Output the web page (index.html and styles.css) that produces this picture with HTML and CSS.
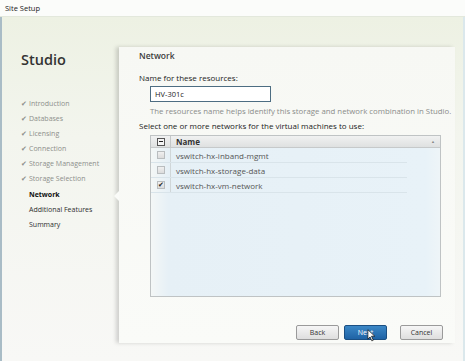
FILE: index.html
```html
<!DOCTYPE html>
<html lang="en">
<head>
  <meta charset="UTF-8" />
  <title>Site Setup</title>
  <link rel="stylesheet" href="styles.css">
</head>
<body>
  <div class="titlebar">Site Setup</div>
  <div class="window">
    <div class="sidebar">
      <h1>Studio</h1>
      <ul class="steps">
        <li class="done"><span class="tick">&#10004;</span>Introduction</li>
        <li class="done"><span class="tick">&#10004;</span>Databases</li>
        <li class="done"><span class="tick">&#10004;</span>Licensing</li>
        <li class="done"><span class="tick">&#10004;</span>Connection</li>
        <li class="done"><span class="tick">&#10004;</span>Storage Management</li>
        <li class="done"><span class="tick">&#10004;</span>Storage Selection</li>
        <li class="current">Network</li>
        <li>Additional Features</li>
        <li>Summary</li>
      </ul>
    </div>

    <div class="panel">
      <h2>Network</h2>
      <label class="field-label" for="resName">Name for these resources:</label>
      <input id="resName" class="name-input" type="text" value="HV-301c" />
      <p class="hint">The resources name helps identify this storage and network combination in Studio.</p>
      <p class="field-label">Select one or more networks for the virtual machines to use:</p>

      <div class="grid">
        <div class="grid-head">
          <span class="cell-check"><span class="box mixed"></span></span>
          <span class="cell-name">Name</span>
          <span class="sort">&#9650;</span>
        </div>
        <div class="grid-row">
          <span class="cell-check"><span class="box"></span></span>
          <span class="cell-name">vswitch-hx-inband-mgmt</span>
        </div>
        <div class="grid-row">
          <span class="cell-check"><span class="box"></span></span>
          <span class="cell-name">vswitch-hx-storage-data</span>
        </div>
        <div class="grid-row">
          <span class="cell-check"><span class="box checked">&#10004;</span></span>
          <span class="cell-name">vswitch-hx-vm-network</span>
        </div>
      </div>

      <div class="actions">
        <button class="btn">Back</button>
        <button class="btn primary">Next
          <svg class="cursor" viewBox="0 0 12 18" aria-hidden="true">
            <path d="M1 1 L1 14 L4 11 L6.5 16.5 L8.5 15.5 L6 10 L10.5 10 Z" fill="#fff" stroke="#111" stroke-width="1"/>
          </svg>
        </button>
        <button class="btn cancel">Cancel</button>
      </div>
    </div>
  </div>
</body>
</html>
```

FILE: styles.css
```css
*, *::before, *::after {
  box-sizing: border-box;
}
body {
  margin: 0;
  width: 465px;
  height: 361px;
  overflow: hidden;
  font-family: "Open Sans", "Noto Sans", sans-serif;
  font-size: 8px;
  color: #2b2b2b;
  background: #f7f8f4;
}

.titlebar {
  height: 17px;
  line-height: 16px;
  padding-left: 5px;
  font-size: 7.5px;
  color: #222;
  background: #fbfcfa;
  border-bottom: 1px solid #e3e8dc;
}

.window {
  display: flex;
  height: 344px;
  border-left: 2px solid #a9bcc6;
  border-right: 2px solid #dbe8ec;
  background: linear-gradient(180deg, #edf1e3 0%, #f3f5ee 35%, #f8f8f6 100%);
}


.sidebar {
  width: 117px;
  flex-shrink: 0;
  padding: 34px 0 0 19px;
}
.sidebar h1 {
  margin: 0;
  font-size: 14.5px;
  line-height: 18px;
  font-weight: 600;
  color: #333;
}
.steps {
  list-style: none;
  margin: 27px 0 0;
  padding: 0;
}
.steps li {
  height: 15.1px;
  line-height: 15px;
  padding-left: 8px;
  font-size: 7px;
  color: #2e2e2e;
  position: relative;
}
.steps li.done {
  color: #8d8f8b;
}
.steps li.current {
  font-weight: 700;
  color: #111;
}
.tick {
  position: absolute;
  left: 0;
  font-size: 6.5px;
  color: #8d8f8b;
}


.panel {
  flex: 1;
  position: relative;
  margin: 30px 8px 18px 0;
  padding: 3px 0 0 20px;
  background: linear-gradient(180deg, #f7f8f4 0%, #fafbf8 100%);
  box-shadow: -3px 0 4px rgba(0, 0, 0, 0.16);
}
.panel::before {
  content: "";
  position: absolute;
  left: -5px;
  top: 144px;
  border-top: 5px solid transparent;
  border-bottom: 5px solid transparent;
  border-right: 5px solid #fafbf8;
}
.panel h2 {
  margin: 0;
  font-size: 8.5px;
  line-height: 12px;
  font-weight: 600;
  color: #3c3c3c;
}
.field-label {
  display: block;
  margin: 10px 0 0;
  font-size: 8px;
  line-height: 11px;
  color: #222;
}
.name-input {
  display: block;
  margin: 3px 0 0 11px;
  width: 121px;
  height: 16px;
  padding: 0 4px;
  font-family: inherit;
  font-size: 7.5px;
  color: #222;
  background: #fff;
  border: 1.5px solid #4d6d82;
}
.hint {
  margin: 4px 0 0 11px;
  font-size: 7.8px;
  line-height: 10px;
  white-space: nowrap;
  color: #8a8c8a;
}
.hint + .field-label {
  margin-top: 4px;
}


.grid {
  margin: 4px 0 0 11px;
  width: 291px;
  height: 162px;
  border: 1px solid #bfc3c4;
  background: linear-gradient(90deg, #f4f7f6 0%, #e6f0f6 6%, #e8f2f8 95%, #eef5f8 100%);
}
.grid-head {
  display: flex;
  align-items: center;
  height: 12px;
  background: linear-gradient(180deg, #f0f1f1, #dfe1e1);
  border-bottom: 1px solid #c6c9ca;
  position: relative;
}
.grid-row {
  display: flex;
  align-items: center;
  height: 15px;
  border-bottom: 1px solid #d9e4ea;
  margin-right: 33px;
}
.cell-check {
  width: 20px;
  height: 100%;
  display: flex;
  align-items: center;
  justify-content: center;
  border-right: 1px solid #d0d6d8;
}
.grid-head .cell-check {
  border-right-color: #c4c7c8;
}
.cell-name {
  padding-left: 5px;
  font-size: 8px;
  color: #555;
}
.grid-head .cell-name {
  font-weight: 700;
  color: #333;
}
.sort {
  position: absolute;
  right: 5px;
  font-size: 4px;
  color: #888;
}
.box {
  width: 8px;
  height: 8px;
  border: 1px solid #b9bdbf;
  background: linear-gradient(180deg, #f0f0f0, #dcdcdc);
  font-size: 6.5px;
  line-height: 6px;
  text-align: center;
  color: #222;
}
.box.mixed {
  border-color: #555;
  background: #f4f4f4;
  position: relative;
}
.box.mixed::after {
  content: "";
  position: absolute;
  left: 1px;
  right: 1px;
  top: 2.5px;
  height: 1.2px;
  background: #222;
}


.actions {
  display: flex;
  margin: 28px 0 0 157px;
}
.btn {
  width: 43px;
  height: 15px;
  padding: 0;
  font-family: inherit;
  font-size: 7px;
  color: #333;
  background: linear-gradient(180deg, #f6f6f6, #dedede);
  border: 1px solid #9a9a9a;
  border-radius: 2px;
}
.btn.primary {
  position: relative;
  margin-left: 5px;
  color: #fff;
  background: linear-gradient(180deg, #3b87c6, #1f63a5);
  border-color: #1b4f82;
}
.btn.cancel {
  margin-left: 13px;
}
.cursor {
  position: absolute;
  left: 22px;
  top: 3px;
  width: 9px;
  height: 13px;
}
```
